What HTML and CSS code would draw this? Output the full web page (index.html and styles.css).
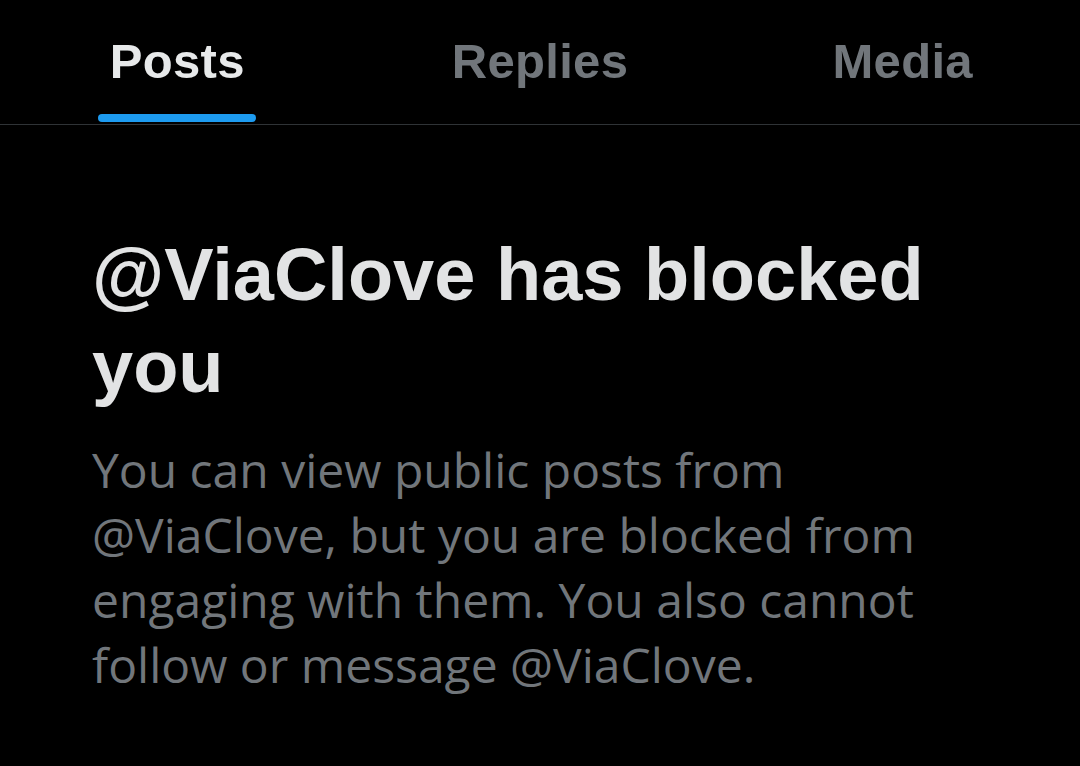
FILE: index.html
```html
<!DOCTYPE html>
<html>
<head>
<meta charset="utf-8">
<link rel="stylesheet" href="styles.css">
</head>
<body>
<nav class="tabs">
  <div class="tab active"><span class="label">Posts</span><span class="indicator"></span></div>
  <div class="tab"><span class="label">Replies</span></div>
  <div class="tab"><span class="label">Media</span></div>
</nav>
<main class="blocked">
  <h1 class="title">@ViaClove has blocked you</h1>
  <p class="desc">You can view public posts from @ViaClove, but you are blocked from engaging with them. You also cannot follow or message @ViaClove.</p>
</main>
</body>
</html>
```
FILE: styles.css
```css
html, body {
  margin: 0;
  padding: 0;
  background: #000;
  width: 1080px;
  height: 766px;
  overflow: hidden;
}
body {
  font-family: "Liberation Sans", Arial, sans-serif;
}
.tabs {
  display: flex;
  height: 124px;
  border-bottom: 1px solid #2f3336;
}
.tab {
  flex: 1;
  position: relative;
  display: flex;
  flex-direction: column;
  align-items: center;
}
.tab:first-child {
  margin-left: -4px;
}
.tab:last-child {
  margin-right: -4px;
}
.label {
  margin-top: 33px;
  font-size: 49px;
  font-weight: bold;
  line-height: 56px;
  letter-spacing: 0.3px;
  color: #71767b;
}
.tab.active .label {
  color: #e7e9ea;
}
.indicator {
  position: absolute;
  bottom: 2px;
  width: 158px;
  height: 8px;
  border-radius: 4px;
  background: #1d9bf0;
}
.blocked {
  padding: 0 92px;
}
.title {
  margin: 104px 0 0;
  font-size: 74px;
  font-weight: bold;
  line-height: 92px;
  color: #e2e3e4;
}
.desc {
  margin: 24px 0 0;
  font-family: "Open Sans", sans-serif;
  font-size: 48px;
  line-height: 65px;
  color: #71767b;
}
```
